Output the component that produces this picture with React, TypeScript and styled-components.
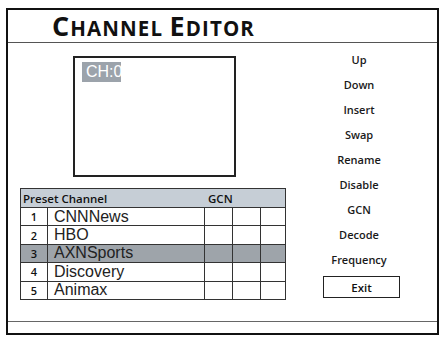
import React from "react";
import styled, { createGlobalStyle } from "styled-components";

const Global = createGlobalStyle`
  html, body { margin: 0; padding: 0; background: #ffffff; }
  body { font-family: "Open Sans", "DejaVu Sans", sans-serif; }
`;

const Frame = styled.div`
  box-sizing: border-box;
  margin: 8px 0 0 6px;
  width: 433px;
  height: 327px;
  border: 2px solid #111;
  display: flex;
  flex-direction: column;
  background: #fff;
`;

const TitleBar = styled.div`
  box-sizing: border-box;
  height: 33px;
  border-bottom: 1px solid #555;
  padding-left: 44px;
  display: flex;
  align-items: flex-end;
`;

const Title = styled.h1`
  margin: 0;
  font-family: "Open Sans", sans-serif;
  font-weight: 700;
  font-size: 20.5px;
  line-height: 28px;
  text-transform: uppercase;
  color: #111;
  letter-spacing: 1.1px;
  white-space: nowrap;
`;

const BigCap = styled.span`
  font-size: 27px;
`;

const Main = styled.div`
  flex: 1;
  display: grid;
  grid-template-columns: 282px 1fr;
  border-bottom: 1px solid #666;
`;

const LeftCol = styled.div`
  display: flex;
  flex-direction: column;
  padding-top: 13px;
`;

const Preview = styled.div`
  box-sizing: border-box;
  margin-left: 65px;
  width: 163px;
  height: 121px;
  border: 2px solid #222;
  padding: 4px 0 0 7px;
`;

const ChLabel = styled.div`
  box-sizing: border-box;
  width: 39px;
  height: 20px;
  background: #9ca3ab;
  color: #fff;
  font-family: "Liberation Sans", Arial, sans-serif;
  font-size: 16px;
  line-height: 20px;
  padding-left: 4px;
  white-space: nowrap;
  overflow: hidden;
`;

const Table = styled.div`
  box-sizing: border-box;
  margin: 11px 0 0 12px;
  width: 266px;
  border: 1px solid #333;
  display: grid;
  grid-template-columns: 27px 157px 28px 28px 1fr;
`;

const HeaderRow = styled.div`
  grid-column: 1 / -1;
  box-sizing: border-box;
  height: 19px;
  background: #c6ced6;
  border-bottom: 1px solid #333;
  display: grid;
  grid-template-columns: 184px 1fr;
  align-items: center;
  font-size: 11.5px;
  font-weight: 600;
  color: #111;
`;

const HeadText = styled.span<{ $pad: number }>`
  padding-left: ${(p) => p.$pad}px;
`;

const Cell = styled.div<{ $sel: boolean; $last: boolean; $endCol: boolean }>`
  box-sizing: border-box;
  height: ${(p) => (p.$last ? "17px" : "18.4px")};
  border-bottom: ${(p) => (p.$last ? "none" : "1px solid #333")};
  border-right: ${(p) => (p.$endCol ? "none" : "1px solid #333")};
  background: ${(p) => (p.$sel ? "#9ea4aa" : "#fff")};
  display: flex;
  align-items: center;
  overflow: hidden;
`;

const NumCell = styled(Cell)`
  justify-content: center;
  font-size: 11px;
  font-weight: 600;
  color: #111;
`;

const NameCell = styled(Cell)`
  padding-left: 6px;
  font-family: "Liberation Sans", Arial, sans-serif;
  font-size: 16px;
  color: #222;
  white-space: nowrap;
`;

const RightCol = styled.div`
  display: flex;
  flex-direction: column;
  align-items: center;
  padding: 4px 9px 0 0;
`;

const MenuItem = styled.div`
  height: 25px;
  line-height: 25px;
  font-size: 11px;
  font-weight: 600;
  color: #1a1a1a;
`;

const ExitButton = styled.div`
  box-sizing: border-box;
  margin: 4px 0 0 5px;
  width: 77px;
  height: 22px;
  border: 1px solid #222;
  display: flex;
  align-items: center;
  justify-content: center;
  font-size: 11.5px;
  font-weight: 600;
  color: #111;
`;

const Footer = styled.div`
  height: 11px;
`;

const channels = ["CNNNews", "HBO", "AXNSports", "Discovery", "Animax"];
const menu = ["Up", "Down", "Insert", "Swap", "Rename", "Disable", "GCN", "Decode", "Frequency"];

export default function App() {
  return (
    <>
      <Global />
      <Frame>
        <TitleBar>
          <Title>
            <BigCap>C</BigCap>hannel <BigCap>E</BigCap>ditor
          </Title>
        </TitleBar>
        <Main>
          <LeftCol>
            <Preview>
              <ChLabel>CH:0</ChLabel>
            </Preview>
            <Table>
              <HeaderRow>
                <HeadText $pad={2}>Preset Channel</HeadText>
                <HeadText $pad={3}>GCN</HeadText>
              </HeaderRow>
              {channels.map((name, i) => {
                const sel = i === 2;
                const last = i === channels.length - 1;
                return (
                  <React.Fragment key={name}>
                    <NumCell $sel={sel} $last={last} $endCol={false}>{i + 1}</NumCell>
                    <NameCell $sel={sel} $last={last} $endCol={false}>{name}</NameCell>
                    <Cell $sel={sel} $last={last} $endCol={false} />
                    <Cell $sel={sel} $last={last} $endCol={false} />
                    <Cell $sel={sel} $last={last} $endCol={true} />
                  </React.Fragment>
                );
              })}
            </Table>
          </LeftCol>
          <RightCol>
            {menu.map((m) => (
              <MenuItem key={m}>{m}</MenuItem>
            ))}
            <ExitButton>Exit</ExitButton>
          </RightCol>
        </Main>
        <Footer />
      </Frame>
    </>
  );
}
